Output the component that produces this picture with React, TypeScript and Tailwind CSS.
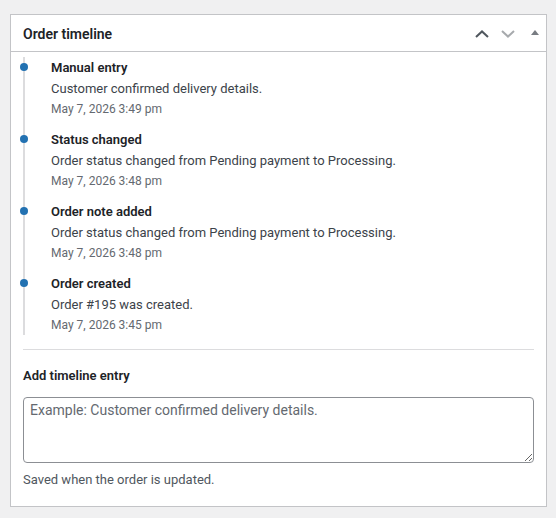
import React from "react";

const entries = [
  { title: "Manual entry", desc: "Customer confirmed delivery details.", date: "May 7, 2026 3:49 pm" },
  { title: "Status changed", desc: "Order status changed from Pending payment to Processing.", date: "May 7, 2026 3:48 pm" },
  { title: "Order note added", desc: "Order status changed from Pending payment to Processing.", date: "May 7, 2026 3:48 pm" },
  { title: "Order created", desc: "Order #195 was created.", date: "May 7, 2026 3:45 pm" },
];

export default function App() {
  return (
    <div
      className="min-h-[518px] w-[556px] bg-[#f0f0f1] pt-[14px] pl-[10px]"
      style={{ fontFamily: '"Segoe UI", Roboto, "Noto Sans", sans-serif' }}
    >
      <div className="w-[537px] border border-[#c3c4c7] bg-white">
        <div className="flex h-[37px] items-center justify-between border-b border-[#c3c4c7] pl-[12px] pr-[7px]">
          <h2 className="pt-[1px] text-[14px] font-semibold leading-[20px] text-[#1d2327]">Order timeline</h2>
          <div className="flex items-center">
            <svg width="14" height="8" viewBox="0 0 14 8" className="mt-[1px]">
              <polyline points="1,7 7,1.4 13,7" fill="none" stroke="#50575e" strokeWidth="2" />
            </svg>
            <svg width="14" height="8" viewBox="0 0 14 8" className="ml-[12px] mt-[1px]">
              <polyline points="1,1 7,6.6 13,1" fill="none" stroke="#a7aaad" strokeWidth="2" />
            </svg>
            <svg width="8" height="5" viewBox="0 0 8 5" className="ml-[16px] mb-[2px]">
              <polygon points="0,5 4,0 8,5" fill="#787c82" />
            </svg>
          </div>
        </div>
        <div className="px-[12px] pt-[5px] pb-[16px]">
          <ul className="border-l-2 border-[#dcdcde]">
            {entries.map((e, i) => (
              <li key={i} className={"relative pl-[26px] " + (i < entries.length - 1 ? "pb-[10px]" : "")}>
                <span className="absolute left-[-5px] top-[6px] h-[8px] w-[8px] rounded-full bg-[#2271b1]" />
                <div className="pt-[1px] text-[13px] font-semibold leading-[20px] text-[#1d2327]">{e.title}</div>
                <div className="pt-[1px] text-[13px] leading-[20px] text-[#3c434a]">{e.desc}</div>
                <div className="text-[12px] leading-[20px] text-[#646970]">{e.date}</div>
              </li>
            ))}
          </ul>
          <div className="mt-[14px] h-px bg-[#dcdcde]" />
          <div className="mt-[15px] pt-[1px] text-[13px] font-semibold leading-[20px] text-[#1d2327]">Add timeline entry</div>
          <textarea
            className="mt-[11px] block h-[66px] w-full resize-y rounded-[4px] border border-[#8c8f94] px-[6px] py-[2px] text-[14px] leading-[20px] text-[#2c3338] placeholder:text-[#646970] outline-none"
            placeholder="Example: Customer confirmed delivery details."
          />
          <div className="mt-[7px] text-[13px] leading-[20px] text-[#50575e]">Saved when the order is updated.</div>
        </div>
      </div>
    </div>
  );
}
